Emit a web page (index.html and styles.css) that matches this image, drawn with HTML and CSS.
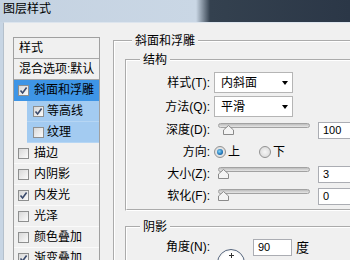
FILE: index.html
```html
<!DOCTYPE html>
<html>
<head>
<meta charset="utf-8">
<link rel="stylesheet" href="styles.css">
</head>
<body>
<div class="titlebar">图层样式</div>
<div class="dialog">
  <ul class="styles-list">
    <li class="item header">样式</li>
    <li class="item header">混合选项:默认</li>
    <li class="item selected"><span class="cb"><svg viewBox="0 0 9 9"><path d="M1.5 4.5 L3.6 7 L7.6 1.5"/></svg></span>斜面和浮雕</li>
    <li class="item sub"><span class="cb"><svg viewBox="0 0 9 9"><path d="M1.5 4.5 L3.6 7 L7.6 1.5"/></svg></span>等高线</li>
    <li class="item sub"><span class="cb"></span>纹理</li>
    <li class="item"><span class="cb"></span>描边</li>
    <li class="item"><span class="cb"></span>内阴影</li>
    <li class="item"><span class="cb"><svg viewBox="0 0 9 9"><path d="M1.5 4.5 L3.6 7 L7.6 1.5"/></svg></span>内发光</li>
    <li class="item"><span class="cb"></span>光泽</li>
    <li class="item"><span class="cb"></span>颜色叠加</li>
    <li class="item"><span class="cb"><svg viewBox="0 0 9 9"><path d="M1.5 4.5 L3.6 7 L7.6 1.5"/></svg></span>渐变叠加</li>
  </ul>
  <div class="panel">
    <fieldset class="group outer">
      <legend>斜面和浮雕</legend>
      <fieldset class="group inner">
        <legend>结构</legend>
        <div class="row sel"><span class="label">样式(T):</span><div class="select"><span>内斜面</span><span class="arrow"></span></div></div>
        <div class="row sel last"><span class="label">方法(Q):</span><div class="select"><span>平滑</span><span class="arrow"></span></div></div>
        <div class="row"><span class="label">深度(D):</span><div class="slider"><div class="track"></div><svg class="thumb" style="left:5px" viewBox="0 0 11 10"><polygon points="5.5,0.5 10.5,5 10.5,9.5 0.5,9.5 0.5,5"/></svg></div><div class="num">100</div></div>
        <div class="row"><span class="label">方向:</span><span class="radio on"></span><span class="opt">上</span><span class="radio second"></span><span class="opt">下</span></div>
        <div class="row"><span class="label">大小(Z):</span><div class="slider"><div class="track"></div><svg class="thumb" style="left:0px" viewBox="0 0 11 10"><polygon points="5.5,0.5 10.5,5 10.5,9.5 0.5,9.5 0.5,5"/></svg></div><div class="num">3</div></div>
        <div class="row"><span class="label">软化(F):</span><div class="slider"><div class="track"></div><svg class="thumb" style="left:0px" viewBox="0 0 11 10"><polygon points="5.5,0.5 10.5,5 10.5,9.5 0.5,9.5 0.5,5"/></svg></div><div class="num">0</div></div>
      </fieldset>
      <fieldset class="group inner shadow">
        <legend>阴影</legend>
        <div class="row angle"><span class="label">角度(N):</span><span class="dial"></span><div class="num deg">90</div><span class="unit">度</span></div>
      </fieldset>
    </fieldset>
  </div>
</div>
</body>
</html>
```

FILE: styles.css
```css
* { box-sizing: border-box; }
html, body { margin: 0; padding: 0; }
body {
  width: 350px;
  height: 260px;
  overflow: hidden;
  background: #c7d5e4;
  font: 12px/16px "Liberation Sans", "Noto Sans CJK SC", sans-serif;
  color: #000;
}
.titlebar {
  height: 22px;
  padding-left: 3px;
  line-height: 18px;
  background: linear-gradient(to right, #c4d2e1 0, #cad7e5 196px, #34414f 210px, #2b3747 100%);
}
.dialog {
  display: flex;
  align-items: flex-start;
  height: 238px;
  margin-left: 3px;
  background: #f0f0f0;
  border-top: 1px solid #dde5ee;
  border-left: 1px solid #b4c0cc;
}
.styles-list {
  list-style: none;
  margin: 14px 0 0 9px;
  padding: 0;
  width: 87px;
  flex: none;
  border: 1px solid #a0a0a0;
  border-bottom: none;
}
.item {
  display: flex;
  align-items: center;
  gap: 5px;
  height: 21px;
  padding-left: 4px;
  border-bottom: 1px solid #fafafa;
  white-space: nowrap;
}
.item.header {
  padding-left: 5px;
  border-bottom-color: #a8a8a8;
}
.item.selected { background: #3e95e6; border-bottom-color: #3e95e6; }
.item.sub {
  margin-left: 13px;
  padding-left: 6px;
  gap: 3px;
  background: #a3cbf1;
  border-bottom-color: #b6d6f4;
}
.cb {
  flex: none;
  width: 11px;
  height: 11px;
  border: 1px solid #8e8f8f;
  background: linear-gradient(135deg, #d8d8d8, #fbfbfb);
  display: flex;
  align-items: center;
  justify-content: center;
}
.cb svg { width: 9px; height: 9px; }
.cb path { fill: none; stroke: #3a4a6c; stroke-width: 1.6; }

.panel { margin: 10px 0 0 13px; }
fieldset.group {
  margin: 0;
  min-width: 0;
  border: 2px groove #ffffff;
  border-right: none;
}
legend { padding: 0 3px; line-height: 16px; }
fieldset.outer { width: 250px; padding: 3px 0 0 10px; }
fieldset.outer > legend { margin-left: 7px; }
fieldset.inner { width: 240px; padding: 4px 0 2px 0; }
fieldset.inner > legend { margin-left: 13px; }
fieldset.shadow { margin-top: 8px; padding: 4px 0 0 0; }

.row { display: flex; align-items: center; height: 22px; white-space: nowrap; }
.row.sel { height: 21px; margin-bottom: 3px; }
.row.sel.last { margin-bottom: 2px; }
.label { flex: none; width: 83px; text-align: right; }
.select {
  margin-left: 4px;
  width: 79px;
  height: 21px;
  background: #fff;
  border: 1px solid #b5b5b5;
  display: flex;
  align-items: center;
  justify-content: space-between;
  padding: 0 4px 0 6px;
}
.arrow {
  width: 0;
  height: 0;
  border-left: 3.5px solid transparent;
  border-right: 3.5px solid transparent;
  border-top: 4px solid #000;
}
.slider {
  position: relative;
  align-self: flex-start;
  margin: 4px 0 0 8px;
  width: 92px;
  height: 14px;
}
.track {
  height: 5px;
  border: 1px solid #a2a2a2;
  border-radius: 3px;
  background: linear-gradient(#bdbdbd, #e6e6e6);
}
.thumb { position: absolute; top: 2px; width: 11px; height: 10px; }
.thumb polygon { fill: #f4f4f4; stroke: #8a8a8a; stroke-width: 1; }
.num {
  margin-left: 8px;
  width: 40px;
  height: 17px;
  background: #fff;
  border: 1px solid #abadb3;
  border-right: none;
  padding-left: 4px;
  font-size: 11px;
  line-height: 15px;
}
.radio {
  flex: none;
  margin-left: 4px;
  width: 12px;
  height: 12px;
  border-radius: 50%;
  border: 1px solid #929292;
  background: radial-gradient(circle, #f6f6f6, #d4d4d4);
  display: flex;
  align-items: center;
  justify-content: center;
}
.radio.on::after {
  content: "";
  width: 6px;
  height: 6px;
  border-radius: 50%;
  background: radial-gradient(circle at 40% 40%, #86d4f6, #1f74b8 60%, #0d4377);
}
.radio.second { margin-left: 19px; }
.opt { margin-left: 2px; }
.row.angle { align-items: flex-start; height: auto; }
.angle .label { line-height: 17px; }
.dial {
  position: relative;
  flex: none;
  margin: 10px 0 0 7px;
  width: 28px;
  height: 28px;
  border-radius: 50%;
  border: 1px solid #55657d;
  background: radial-gradient(circle, #ffffff 55%, #e4e4e4);
}
.dial::before, .dial::after {
  content: "";
  position: absolute;
  background: #333;
}
.dial::before { left: 13px; top: 3px; width: 1px; height: 5px; }
.dial::after { left: 11px; top: 5px; width: 5px; height: 1px; }
.num.deg { width: 39px; border-right: 1px solid #abadb3; }
.unit { margin-left: 4px; line-height: 17px; font-size: 13px; }
```
